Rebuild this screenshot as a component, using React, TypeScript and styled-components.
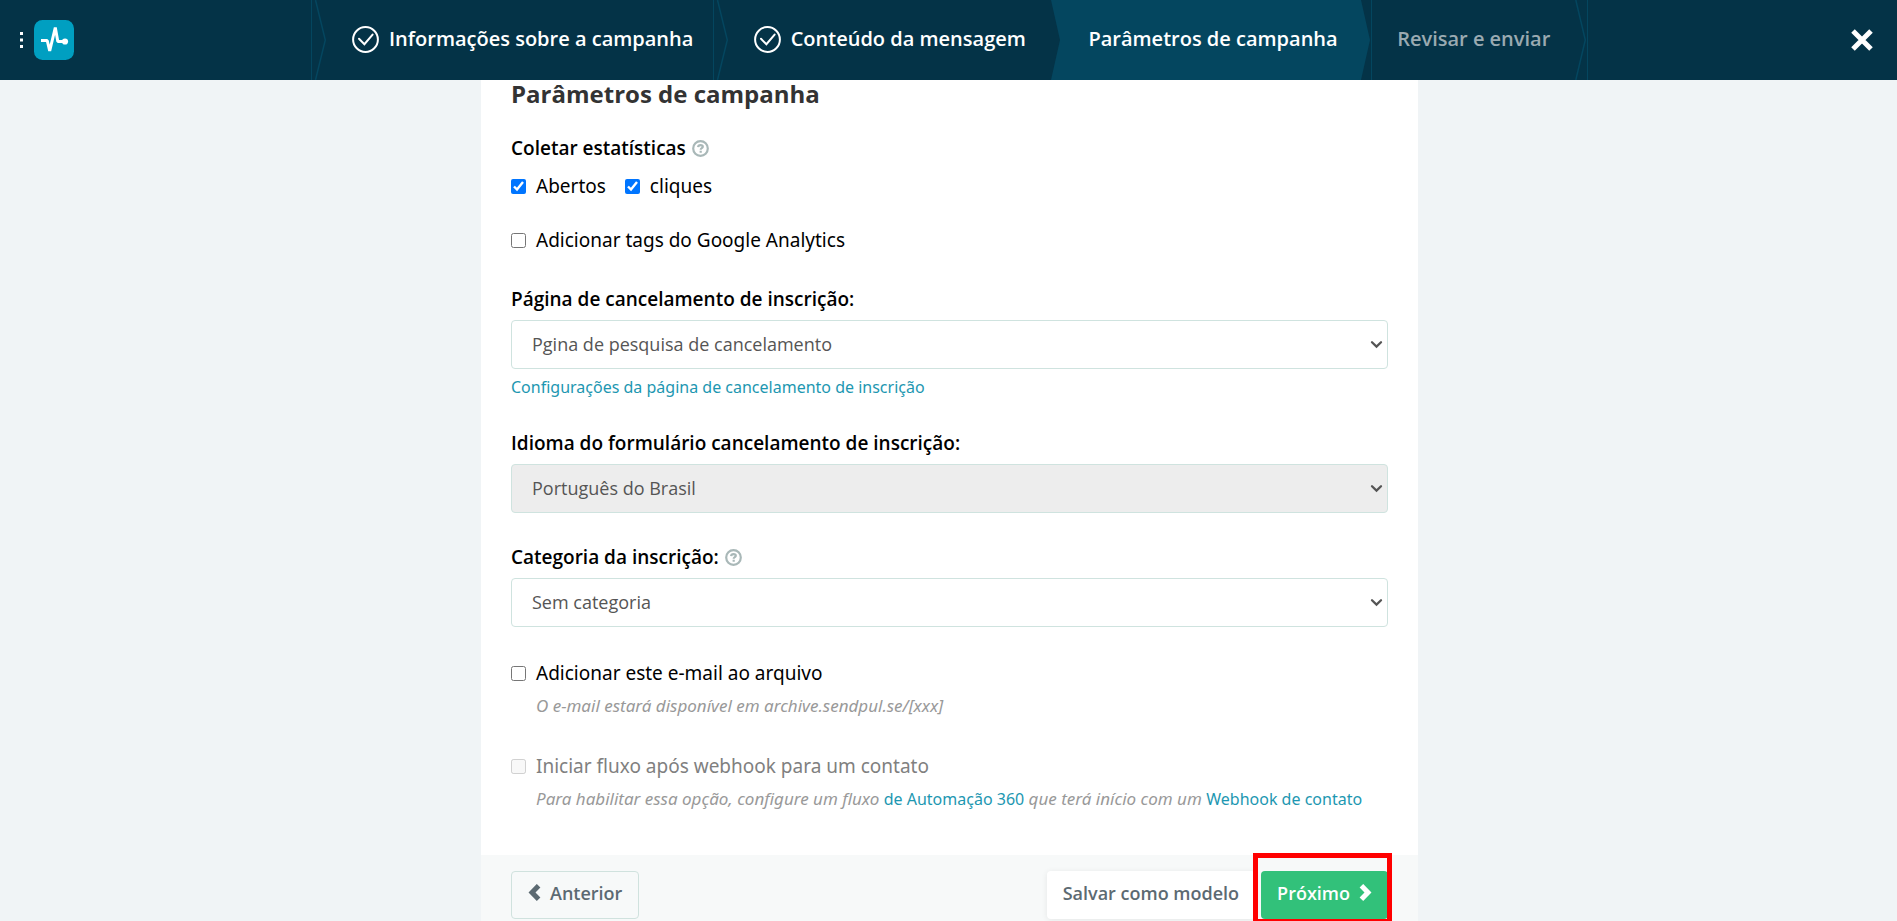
import React from "react";
import styled, { createGlobalStyle } from "styled-components";

const GlobalStyle = createGlobalStyle`
  *, *::before, *::after { box-sizing: border-box; }
  body {
    margin: 0;
    background: #f0f4f6;
    color: #000;
    font-family: "Open Sans", "Noto Sans", sans-serif;
  }
  h1, h2, p { margin: 0; }
`;

const bodyFont = `"Noto Sans", "Open Sans", sans-serif`;
const barColor = "#043347";
const activeColor = "#04465f";

const Page = styled.div`
  display: flex;
  flex-direction: column;
  height: 100vh;
  overflow: hidden;
`;

const TopBar = styled.header`
  flex: none;
  display: grid;
  grid-template-columns: 1fr minmax(0, 1277px) 1fr;
  align-items: center;
  height: 80px;
  padding-left: 2px;
  background: ${barColor};
`;

const Brand = styled.div`
  display: flex;
  align-items: center;
  gap: 11px;
  padding-left: 18px;
`;

const IconButton = styled.button`
  display: flex;
  padding: 0;
  border: 0;
  background: none;
  color: #fff;
  cursor: pointer;
`;

const BrandLink = styled.a`
  display: flex;
`;

const CloseArea = styled.div`
  display: flex;
  justify-content: flex-end;
  padding-right: 24px;
`;

const Steps = styled.nav`
  display: grid;
  grid-template-columns: 402fr 338fr 321fr 216fr;
  height: 80px;
  border-left: 1px solid ${activeColor};
`;

const Step = styled.a<{ $state: "done" | "current" | "next"; $line?: boolean }>`
  position: relative;
  display: flex;
  align-items: center;
  gap: 10px;
  min-width: 0;
  padding: 0 0 2px ${(p) => (p.$state === "done" ? 40 : p.$state === "current" ? 37 : 25)}px;
  border-right: ${(p) => (p.$line ? `1px solid ${activeColor}` : "0")};
  background: ${(p) => (p.$state === "current" ? activeColor : "transparent")};
  color: ${(p) => (p.$state === "next" ? "#9aaab1" : "#fff")};
  font-size: 20px;
  font-weight: 600;
  line-height: 28px;
  white-space: nowrap;
  text-decoration: none;
`;

const Edge = styled.svg<{ $side: "left" | "right" }>`
  position: absolute;
  top: 0;
  ${(p) => (p.$side === "left" ? "left: 0;" : "right: 0;")}
`;

const Content = styled.div`
  flex: 1;
  display: flex;
  justify-content: center;
  min-height: 0;
  padding-left: 2px;
`;

const Main = styled.main`
  flex: 1;
  display: flex;
  flex-direction: column;
  max-width: 937px;
  background: #fff;
`;

const Form = styled.form`
  flex: 1;
  display: flex;
  flex-direction: column;
`;

const Fields = styled.div`
  padding: 0 30px 44px;
`;

const Title = styled.h1`
  color: #333;
  font-size: 24px;
  font-weight: 700;
  line-height: 28px;
`;

const Group = styled.div<{ $gap: number }>`
  display: flex;
  flex-direction: column;
  align-items: flex-start;
  gap: 8px;
  margin-top: ${(p) => p.$gap}px;
`;

const Label = styled.label`
  color: #000;
  font-size: 19px;
  font-weight: 600;
  line-height: 26px;
`;

const LabelRow = styled.div`
  display: flex;
  align-items: center;
  gap: 6px;
  color: #a9b8b8;
`;

const CheckRow = styled.div`
  display: flex;
  gap: 19px;
  margin-top: 4px;
`;

const CheckLabel = styled.label<{ $muted?: boolean }>`
  display: flex;
  align-items: center;
  gap: 10px;
  color: ${(p) => (p.$muted ? "#808080" : "#000")};
  font-family: ${bodyFont};
  font-size: 19px;
  line-height: 26px;
`;

const Checkbox = styled.input.attrs({ type: "checkbox" })`
  width: 15px;
  height: 15px;
  margin: 0;
`;

const SelectBox = styled.div`
  position: relative;
  width: 100%;

  svg {
    position: absolute;
    top: 20px;
    right: 5px;
    pointer-events: none;
  }
`;

const Select = styled.select`
  appearance: none;
  display: block;
  width: 100%;
  height: 49px;
  padding: 0 32px 2px 20px;
  border: 1px solid #cfe3df;
  border-radius: 4px;
  background: #fff;
  color: #555;
  font-family: "Open Sans", sans-serif;
  font-size: 18px;

  &:disabled {
    background: #ededed;
    opacity: 1;
  }
`;

const Link = styled.a`
  color: #1d97b1;
  font-family: ${bodyFont};
  font-size: 16px;
  line-height: 20px;
  text-decoration: none;
`;

const Hint = styled.p`
  padding-left: 25px;
  color: #999;
  font-family: ${bodyFont};
  font-size: 17px;
  font-style: italic;
  line-height: 24px;
`;

const HintLink = styled.a`
  color: #1d97b1;
  font-style: normal;
  font-size: 16px;
  text-decoration: none;
`;

const Footer = styled.footer`
  flex: 1;
  display: flex;
  align-items: flex-start;
  gap: 6px;
  padding: 16px 30px;
  background: #f7f9f9;
`;

const Button = styled.button<{ $kind: "outline" | "plain" | "primary" }>`
  display: flex;
  align-items: center;
  gap: 9px;
  height: 48px;
  padding: 0 16px 4px;
  border: ${(p) => (p.$kind === "outline" ? "1px solid #d0e2de" : "0")};
  border-radius: 4px;
  background: ${(p) =>
    p.$kind === "primary" ? "#32c17a" : p.$kind === "plain" ? "#fff" : "transparent"};
  box-shadow: ${(p) => (p.$kind === "plain" ? "0 1px 6px rgba(0, 0, 0, 0.08)" : "none")};
  color: ${(p) => (p.$kind === "primary" ? "#fff" : "#5c6a72")};
  font-family: "Open Sans", sans-serif;
  font-size: 18px;
  font-weight: 600;
  white-space: nowrap;
  cursor: pointer;
`;

const Spacer = styled.div`
  flex: 1;
`;

const Highlighted = styled.div`
  position: relative;

  &::after {
    content: "";
    position: absolute;
    inset: -18px -4px -5px -8px;
    border: 5px solid #f00;
    pointer-events: none;
  }
`;

const CheckCircle = () => (
  <svg width="27" height="27" viewBox="0 0 27 27" fill="none" stroke="#fff" strokeWidth="2" aria-hidden="true">
    <circle cx="13.5" cy="13.5" r="12.4" />
    <path d="M7 12.8l5.4 5.4 8.2-9.6" strokeLinecap="round" />
  </svg>
);

const Arrow = () => (
  <Edge $side="left" width="18" height="80" viewBox="0 0 18 80" fill="none" stroke={activeColor} strokeWidth="1.5" aria-hidden="true">
    <path d="M3.5 0L13.3 40L3.5 80" />
  </Edge>
);

const Chevron = ({ back }: { back?: boolean }) => (
  <svg width="13" height="18" viewBox="0 0 13 18" fill="none" stroke="currentColor" strokeWidth="5" aria-hidden="true">
    <path d={back ? "M10.6 1.7L4 8.5l6.6 6.8" : "M2.4 1.7L9 8.5l-6.6 6.8"} />
  </svg>
);

const HelpIcon = () => (
  <svg width="17" height="17" viewBox="0 0 17 17" fill="none" stroke="currentColor" strokeWidth="2.2" aria-hidden="true">
    <circle cx="8.5" cy="8.5" r="7.3" />
    <path d="M6.1 7.100C6.200 5.700 7.200 5.100 8.500 5.100c1.300 0 2.300.700 2.300 1.700 0 1.400-2.100 1.400-2.100 2.900M8.700 10.800v2" />
  </svg>
);

type DropdownProps = { id: string; value: string; disabled?: boolean };

const Dropdown = ({ id, value, disabled }: DropdownProps) => (
  <SelectBox>
    <Select id={id} disabled={disabled}>
      <option>{value}</option>
    </Select>
    <svg width="13" height="10" viewBox="0 0 13 10" fill="none" stroke="#555" strokeWidth="2.3" strokeLinecap="round" aria-hidden="true">
      <path d="M2 2.200L6.500 6.600L11 2.200" />
    </svg>
  </SelectBox>
);

export default function App() {
  return (
    <Page>
      <GlobalStyle />
      <TopBar>
        <Brand>
          <IconButton type="button" aria-label="Menu">
            <svg width="3" height="16" viewBox="0 0 3 16" fill="#fff">
              <rect width="3" height="3" y="0" />
              <rect width="3" height="3" y="6.5" />
              <rect width="3" height="3" y="13" />
            </svg>
          </IconButton>
          <BrandLink href="#" aria-label="SendPulse">
            <svg width="40" height="40" viewBox="0 0 40 40" fill="none">
              <rect width="40" height="40" rx="8.5" fill="#009fc1" />
              <path
                d="M7 20.500h6.200L15.700 31L21.300 7.500L23.800 21.500H31"
                stroke="#fff"
                strokeWidth="3"
                strokeLinejoin="bevel"
              />
              <circle cx="31" cy="21.5" r="3.1" fill="#fff" />
            </svg>
          </BrandLink>
        </Brand>
        <Steps aria-label="Etapas">
          <Step href="#info" $state="done" $line>
            <Arrow />
            <CheckCircle />
            Informações sobre a campanha
          </Step>
          <Step href="#conteudo" $state="done">
            <Arrow />
            <CheckCircle />
            Conteúdo da mensagem
          </Step>
          <Step href="#parametros" $state="current" aria-current="step">
            <Edge $side="left" width="10" height="80" viewBox="0 0 10 80" fill={barColor} aria-hidden="true">
              <path d="M0 0L9 40L0 80Z" />
            </Edge>
            Parâmetros de campanha
            <Edge $side="right" width="11" height="80" viewBox="0 0 11 80" aria-hidden="true">
              <path d="M0 0H11V80H0L9 40Z" fill={barColor} />
              <path d="M10.5 0V80" stroke={activeColor} />
            </Edge>
          </Step>
          <Step href="#revisar" $state="next" $line>
            Revisar e enviar
            <Edge $side="right" width="12" height="80" viewBox="0 0 12 80" fill="none" stroke={activeColor} strokeWidth="1.5" aria-hidden="true">
              <path d="M0.8 0L10.3 40L0.8 80" />
            </Edge>
          </Step>
        </Steps>
        <CloseArea>
          <IconButton type="button" aria-label="Fechar">
            <svg width="22" height="22" viewBox="0 0 22 22" stroke="#fff" strokeWidth="5">
              <path d="M2 2L20 20M20 2L2 20" />
            </svg>
          </IconButton>
        </CloseArea>
      </TopBar>
      <Content>
        <Main>
          <Form onSubmit={(e) => e.preventDefault()}>
            <Fields>
              <Title>Parâmetros de campanha</Title>
              <Group $gap={27} role="group" aria-labelledby="stats">
                <LabelRow>
                  <Label as="span" id="stats">Coletar estatísticas</Label>
                  <HelpIcon />
                </LabelRow>
                <CheckRow>
                  <CheckLabel><Checkbox defaultChecked />Abertos</CheckLabel>
                  <CheckLabel><Checkbox defaultChecked />cliques</CheckLabel>
                </CheckRow>
              </Group>
              <Group $gap={28}>
                <CheckLabel><Checkbox />Adicionar tags do Google Analytics</CheckLabel>
              </Group>
              <Group $gap={33}>
                <Label htmlFor="pagina">Página de cancelamento de inscrição:</Label>
                <Dropdown id="pagina" value="Pgina de pesquisa de cancelamento" />
                <Link href="#config">Configurações da página de cancelamento de inscrição</Link>
              </Group>
              <Group $gap={33}>
                <Label htmlFor="idioma">Idioma do formulário cancelamento de inscrição:</Label>
                <Dropdown id="idioma" value="Português do Brasil" disabled />
              </Group>
              <Group $gap={31}>
                <LabelRow>
                  <Label htmlFor="categoria">Categoria da inscrição:</Label>
                  <HelpIcon />
                </LabelRow>
                <Dropdown id="categoria" value="Sem categoria" />
              </Group>
              <Group $gap={33}>
                <CheckLabel><Checkbox />Adicionar este e-mail ao arquivo</CheckLabel>
                <Hint>O e-mail estará disponível em archive.sendpul.se/[xxx]</Hint>
              </Group>
              <Group $gap={35}>
                <CheckLabel $muted><Checkbox disabled />Iniciar fluxo após webhook para um contato</CheckLabel>
                <Hint>
                  Para habilitar essa opção, configure um fluxo <HintLink href="#automacao">de Automação 360</HintLink> que
                  terá início com um <HintLink href="#webhook">Webhook de contato</HintLink>
                </Hint>
              </Group>
            </Fields>
            <Footer>
              <Button type="button" $kind="outline"><Chevron back />Anterior</Button>
              <Spacer />
              <Button type="button" $kind="plain">Salvar como modelo</Button>
              <Highlighted>
                <Button type="submit" $kind="primary">Próximo<Chevron /></Button>
              </Highlighted>
            </Footer>
          </Form>
        </Main>
      </Content>
    </Page>
  );
}
